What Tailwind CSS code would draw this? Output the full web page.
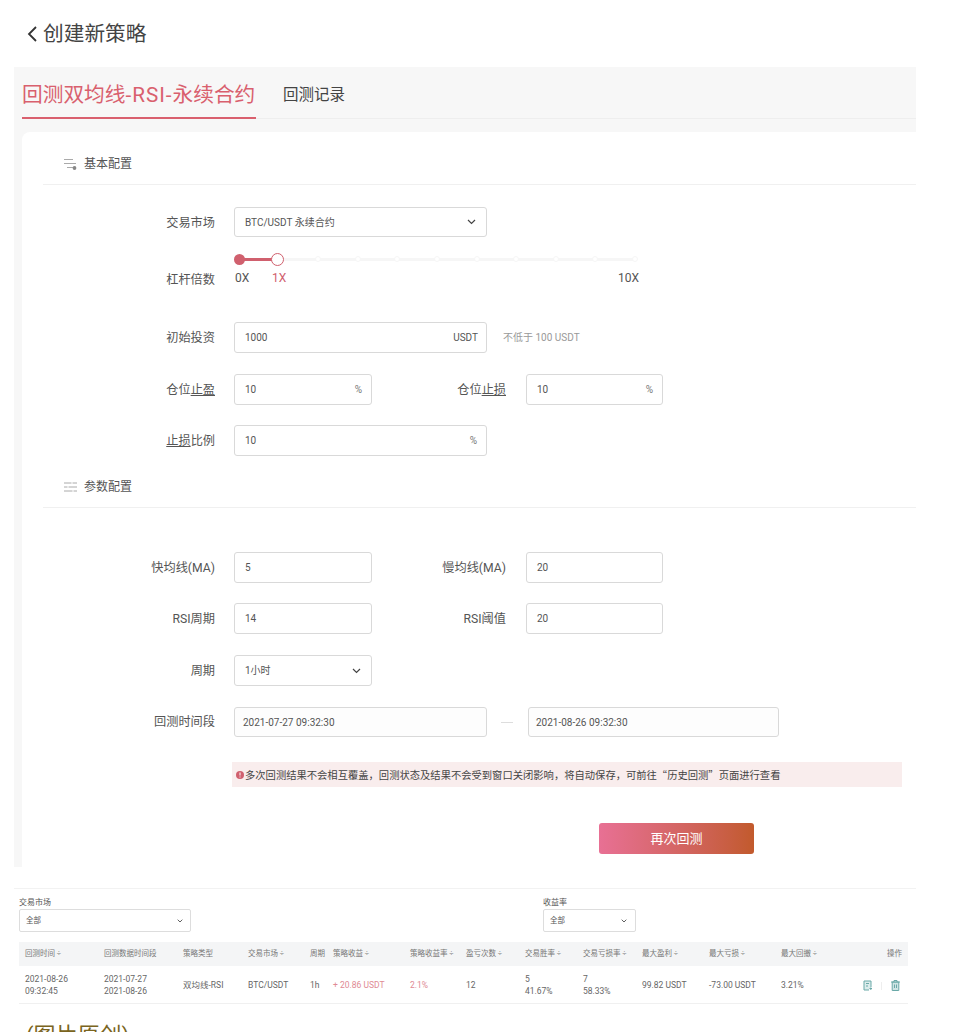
<!DOCTYPE html>
<html lang="zh-CN">
  <head>
    <meta charset="UTF-8" />
    <title>创建新策略</title>
    <script src="https://cdn.jsdelivr.net/npm/@tailwindcss/browser@4"></script>
  </head>
  <body class="bg-white text-[#444] font-['Roboto','Noto_Sans_CJK_SC',sans-serif] h-[1032px] overflow-hidden">
    <!-- page title -->
    <div class="h-[67px] pl-[26px] pt-[20px] flex items-start gap-[4px]">
      <svg class="w-[13px] h-[18px] mt-[5px]" viewBox="0 0 13 18" fill="none" stroke="#333" stroke-width="1.8"><path d="M10 2 L3 9 L10 16" /></svg>
      <h1 class="text-[20.7px] leading-[28px] text-[#444]">创建新策略</h1>
    </div>

    <div class="ml-[14px] w-[902px] h-[800px] bg-[#f7f7f7] pl-[8px]">
      <!-- tabs -->
      <div class="h-[52px] flex items-end border-b border-[#eeeeee]">
        <div class="h-[52px] w-[234px] border-b-2 border-[#d9606e] -mb-px pt-[13px] text-[20.7px] leading-[30px] text-[#d9606e] whitespace-nowrap">回测双均线<span class="tracking-[1px]">-RSI-</span>永续合约</div>
        <div class="h-[52px] ml-[27px] pt-[18px] text-[15.5px] leading-[22px] text-[#444]">回测记录</div>
      </div>

      <!-- form card -->
      <div class="mt-[13px] h-[735px] bg-white rounded-tl-lg pl-[21px]">
        <div class="h-[53px] border-b border-[#f0f0f0] flex items-center pl-[21px] pt-[12px] gap-[7px]">
          <svg class="w-[13px] h-[13px]" viewBox="0 0 13 13" fill="none" stroke="#aaa" stroke-width="1"><path d="M0 1.5 H9 M0 5.5 H12 M3 9.5 H9" /><circle cx="10.5" cy="10" r="1.9" fill="#888" stroke="none" /></svg>
          <span class="text-[12px] text-[#555]">基本配置</span>
        </div>

        <div class="pt-[22px] flex flex-col">
          <!-- 交易市场 -->
          <div class="flex items-center h-[30px]">
            <label class="w-[172px] text-right text-[12.2px] text-[#555] pt-[2px]">交易市场</label>
            <div class="ml-[19px] w-[253px] h-[30px] border border-[#d9d9d9] rounded-[3px] flex items-center justify-between pl-[10px] pr-[10px] text-[10px] text-[#555]">
              <span>BTC/USDT 永续合约</span>
              <svg class="w-[9px] h-[6px]" viewBox="0 0 9 6" fill="none" stroke="#444" stroke-width="1.2"><path d="M1 1 L4.5 4.5 L8 1" /></svg>
            </div>
          </div>

          <!-- 杠杆倍数 -->
          <div class="flex h-[85px]">
            <label class="w-[172px] text-right text-[12.2px] text-[#555] pt-[34px]">杠杆倍数</label>
            <div class="ml-[19px] w-[405px] pt-[16px]">
              <div class="relative h-[12px] ml-[5px] w-[396px] flex items-center">
                <div class="h-[3px] w-[39px] bg-[#d0606e]"></div>
                <div class="h-[3px] flex-1 bg-[#f6f6f6]"></div>
                <div class="absolute inset-x-[-3px] top-[3px] flex justify-between">
                  <span class="w-[6px] h-[6px] rounded-full bg-transparent"></span>
                  <span class="w-[6px] h-[6px] rounded-full bg-transparent"></span>
                  <span class="w-[6px] h-[6px] rounded-full bg-white border border-[#f6f6f6]"></span>
                  <span class="w-[6px] h-[6px] rounded-full bg-white border border-[#f6f6f6]"></span>
                  <span class="w-[6px] h-[6px] rounded-full bg-white border border-[#f6f6f6]"></span>
                  <span class="w-[6px] h-[6px] rounded-full bg-white border border-[#f6f6f6]"></span>
                  <span class="w-[6px] h-[6px] rounded-full bg-white border border-[#f6f6f6]"></span>
                  <span class="w-[6px] h-[6px] rounded-full bg-white border border-[#f6f6f6]"></span>
                  <span class="w-[6px] h-[6px] rounded-full bg-white border border-[#f6f6f6]"></span>
                  <span class="w-[6px] h-[6px] rounded-full bg-white border border-[#f6f6f6]"></span>
                  <span class="w-[6px] h-[6px] rounded-full bg-white border border-[#f6f6f6]"></span>
                </div>
                <span class="absolute left-[-5px] top-[0.5px] w-[11px] h-[11px] rounded-full bg-[#d0606e]"></span>
                <span class="absolute left-[32px] top-[-0.5px] w-[13px] h-[13px] rounded-full bg-white border border-[#d0606e]"></span>
              </div>
              <div class="mt-[6px] pl-[1px] flex text-[12px] leading-[14px] text-[#555]">
                <span class="w-[37px]">0X</span>
                <span class="text-[#d0606e]">1X</span>
                <span class="ml-auto">10X</span>
              </div>
            </div>
          </div>

          <!-- 初始投资 -->
          <div class="flex items-center h-[31px]">
            <label class="w-[172px] text-right text-[12.2px] text-[#555] pt-[2px]">初始投资</label>
            <div class="ml-[19px] w-[253px] h-[31px] border border-[#d9d9d9] rounded-[3px] flex items-center justify-between pl-[10px] pr-[8px] text-[10px] text-[#555]">
              <span>1000</span><span>USDT</span>
            </div>
            <span class="ml-[16px] text-[10px] text-[#999]">不低于 100 USDT</span>
          </div>

          <!-- 仓位止盈 / 仓位止损 -->
          <div class="flex items-center h-[31px] mt-[21px]">
            <label class="w-[172px] text-right text-[12.2px] text-[#555] pt-[2px]">仓位<span class="underline">止盈</span></label>
            <div class="ml-[19px] w-[138px] h-[31px] border border-[#d9d9d9] rounded-[3px] flex items-center justify-between pl-[10px] pr-[9px] text-[10px] text-[#555]">
              <span>10</span><span class="text-[#777]">%</span>
            </div>
            <label class="w-[134px] text-right text-[12.2px] text-[#555] pt-[2px]">仓位<span class="underline">止损</span></label>
            <div class="ml-[20px] w-[137px] h-[31px] border border-[#d9d9d9] rounded-[3px] flex items-center justify-between pl-[10px] pr-[9px] text-[10px] text-[#555]">
              <span>10</span><span class="text-[#777]">%</span>
            </div>
          </div>

          <!-- 止损比例 -->
          <div class="flex items-center h-[31px] mt-[20px]">
            <label class="w-[172px] text-right text-[12.2px] text-[#555] pt-[2px]"><span class="underline">止损</span>比例</label>
            <div class="ml-[19px] w-[253px] h-[31px] border border-[#d9d9d9] rounded-[3px] flex items-center justify-between pl-[10px] pr-[9px] text-[10px] text-[#555]">
              <span>10</span><span class="text-[#777]">%</span>
            </div>
          </div>
        </div>

        <!-- 参数配置 -->
        <div class="h-[52px] border-b border-[#f0f0f0] flex items-center pl-[21px] pt-[11px] gap-[7px]">
          <svg class="w-[13px] h-[12px]" viewBox="0 0 13 12" fill="none" stroke="#aaa" stroke-width="1"><path d="M0 2 H13 M0 6 H13 M0 10 H13" /><path d="M8 0.5 V3.5 M4 4.5 V7.5 M9 8.5 V11.5" stroke="#fff" stroke-width="1" /></svg>
          <span class="text-[12px] text-[#555]">参数配置</span>
        </div>

        <div class="pt-[44px] flex flex-col">
          <div class="flex items-center h-[31px]">
            <label class="w-[172px] text-right text-[12.2px] text-[#555] pt-[2px]">快均线(MA)</label>
            <div class="ml-[19px] w-[138px] h-[31px] border border-[#d9d9d9] rounded-[3px] flex items-center px-[10px] text-[10px] text-[#555]">5</div>
            <label class="w-[134px] text-right text-[12.2px] text-[#555] pt-[2px]">慢均线(MA)</label>
            <div class="ml-[20px] w-[137px] h-[31px] border border-[#d9d9d9] rounded-[3px] flex items-center px-[10px] text-[10px] text-[#555]">20</div>
          </div>
          <div class="flex items-center h-[31px] mt-[20px]">
            <label class="w-[172px] text-right text-[12.2px] text-[#555] pt-[2px]">RSI周期</label>
            <div class="ml-[19px] w-[138px] h-[31px] border border-[#d9d9d9] rounded-[3px] flex items-center px-[10px] text-[10px] text-[#555]">14</div>
            <label class="w-[134px] text-right text-[12.2px] text-[#555] pt-[2px]">RSI阈值</label>
            <div class="ml-[20px] w-[137px] h-[31px] border border-[#d9d9d9] rounded-[3px] flex items-center px-[10px] text-[10px] text-[#555]">20</div>
          </div>
          <div class="flex items-center h-[31px] mt-[21px]">
            <label class="w-[172px] text-right text-[12.2px] text-[#555] pt-[2px]">周期</label>
            <div class="ml-[19px] w-[138px] h-[31px] border border-[#d9d9d9] rounded-[3px] flex items-center justify-between px-[10px] text-[10px] text-[#555]">
              <span>1小时</span>
              <svg class="w-[9px] h-[6px]" viewBox="0 0 9 6" fill="none" stroke="#444" stroke-width="1.2"><path d="M1 1 L4.5 4.5 L8 1" /></svg>
            </div>
          </div>
          <div class="flex items-center h-[30px] mt-[21px]">
            <label class="w-[172px] text-right text-[12.2px] text-[#555]">回测时间段</label>
            <div class="ml-[19px] w-[253px] h-[30px] border border-[#d9d9d9] rounded-[3px] bg-[#fdfdfd] flex items-center px-[8px] text-[10px] text-[#555]">2021-07-27 09:32:30</div>
            <span class="ml-[14px] w-[12px] h-px bg-[#dddddd]"></span>
            <div class="ml-[15px] w-[251px] h-[30px] border border-[#d9d9d9] rounded-[3px] bg-[#fdfdfd] flex items-center px-[7px] text-[10px] text-[#555]">2021-08-26 09:32:30</div>
          </div>

          <div class="ml-[189px] mt-[25px] w-[670px] h-[25px] bg-[#f9eded] flex items-center pl-[4px] text-[10.3px] text-[#444] font-['Noto_Sans_CJK_SC',sans-serif] whitespace-nowrap">
            <svg class="w-[8px] h-[8px] mr-px" viewBox="0 0 8 8"><circle cx="4" cy="4" r="4" fill="#d0606e" /><path d="M4 1.5 V4.5 M4 5.5 V6.5" stroke="#fff" stroke-width="1" /></svg>
            <span>多次回测结果不会相互覆盖，回测状态及结果不会受到窗口关闭影响，将自动保存，可前往“历史回测”页面进行查看</span>
          </div>

          <button class="ml-[556px] mt-[36px] w-[155px] h-[31px] rounded-[3px] bg-gradient-to-r from-[#e87094] to-[#c25a2c] text-white text-[13px]">再次回测</button>
        </div>
      </div>
    </div>

    <!-- backtest history -->
    <div class="ml-[14px] w-[902px] mt-[21px] border-t border-[#f2f2f2] pl-[5px] pr-[8px]">
      <div class="flex pt-[8px]">
        <div class="w-[524px]">
          <div class="text-[8px] leading-[12px] text-[#555]">交易市场</div>
          <div class="w-[172px] h-[23px] border border-[#dddddd] rounded-[2px] flex items-center justify-between pl-[6px] pr-[7px] text-[7.5px] text-[#555]">
            <span>全部</span>
            <svg class="w-[6px] h-[4px]" viewBox="0 0 9 6" fill="none" stroke="#555" stroke-width="1.4"><path d="M1 1 L4.5 4.5 L8 1" /></svg>
          </div>
        </div>
        <div>
          <div class="text-[8px] leading-[12px] text-[#555]">收益率</div>
          <div class="w-[93px] h-[23px] border border-[#dddddd] rounded-[2px] flex items-center justify-between pl-[6px] pr-[8px] text-[7.5px] text-[#555]">
            <span>全部</span>
            <svg class="w-[6px] h-[4px]" viewBox="0 0 9 6" fill="none" stroke="#555" stroke-width="1.4"><path d="M1 1 L4.5 4.5 L8 1" /></svg>
          </div>
        </div>
      </div>

      <div class="mt-[10px] h-[24px] bg-[#f4f5f6] pl-[6px] pr-[6px] grid grid-cols-[79px_79px_65px_62px_23px_77px_56px_59px_58px_59px_67px_72px_1fr] items-center text-[7.5px] text-[#777] whitespace-nowrap">
        <span>回测时间 ÷</span>
        <span>回测数据时间段</span>
        <span>策略类型</span>
        <span>交易市场 ÷</span>
        <span>周期</span>
        <span>策略收益 ÷</span>
        <span>策略收益率 ÷</span>
        <span>盈亏次数 ÷</span>
        <span>交易胜率 ÷</span>
        <span>交易亏损率 ÷</span>
        <span>最大盈利 ÷</span>
        <span>最大亏损 ÷</span>
        <span class="flex justify-between"><span>最大回撤 ÷</span><span>操作</span></span>
      </div>
      <div class="h-[38px] border-b border-[#f0f0f0] pl-[6px] pr-[6px] grid grid-cols-[79px_79px_65px_62px_23px_77px_56px_59px_58px_59px_67px_72px_1fr] items-center text-[8.5px] leading-[12px] text-[#666] whitespace-nowrap">
        <span>2021-08-26<br />09:32:45</span>
        <span>2021-07-27<br />2021-08-26</span>
        <span>双均线-RSI</span>
        <span>BTC/USDT</span>
        <span>1h</span>
        <span class="text-[#e08a94]">+ 20.86 USDT</span>
        <span class="text-[#e08a94]">2.1%</span>
        <span>12</span>
        <span>5<br />41.67%</span>
        <span>7<br />58.33%</span>
        <span>99.82 USDT</span>
        <span>-73.00 USDT</span>
        <span class="flex items-center justify-between">
          <span>3.21%</span>
          <span class="flex items-center gap-[9px] mr-[2px] mt-[2px]">
            <svg class="w-[9px] h-[11px]" viewBox="0 0 9 11" fill="#dcecec" stroke="#6aa9a8" stroke-width="1"><path d="M8 7 V1 H1 V10 H6" /><path d="M3 3.5 H6 M3 6 H5" /><path d="M6.5 8.5 H9 M7.8 7.5 V10" /></svg>
            <span class="w-px h-[8px] bg-[#eeeeee]"></span>
            <svg class="w-[9px] h-[11px]" viewBox="0 0 9 11" fill="#cfe4e4" stroke="#6aa9a8" stroke-width="1"><path d="M1.2 2 V10.5 H7.8 V2 Z" /><path d="M0 2 H9 M3 2 V0.5 H6 V2" /><path d="M3.5 4.5 V8 M5.5 4.5 V8" /></svg>
          </span>
        </span>
      </div>
    </div>

    <div class="pl-[26px] mt-[17px] text-[22px] leading-[30px] text-[#7a6420]">(图片原创)</div>
  </body>
</html>
